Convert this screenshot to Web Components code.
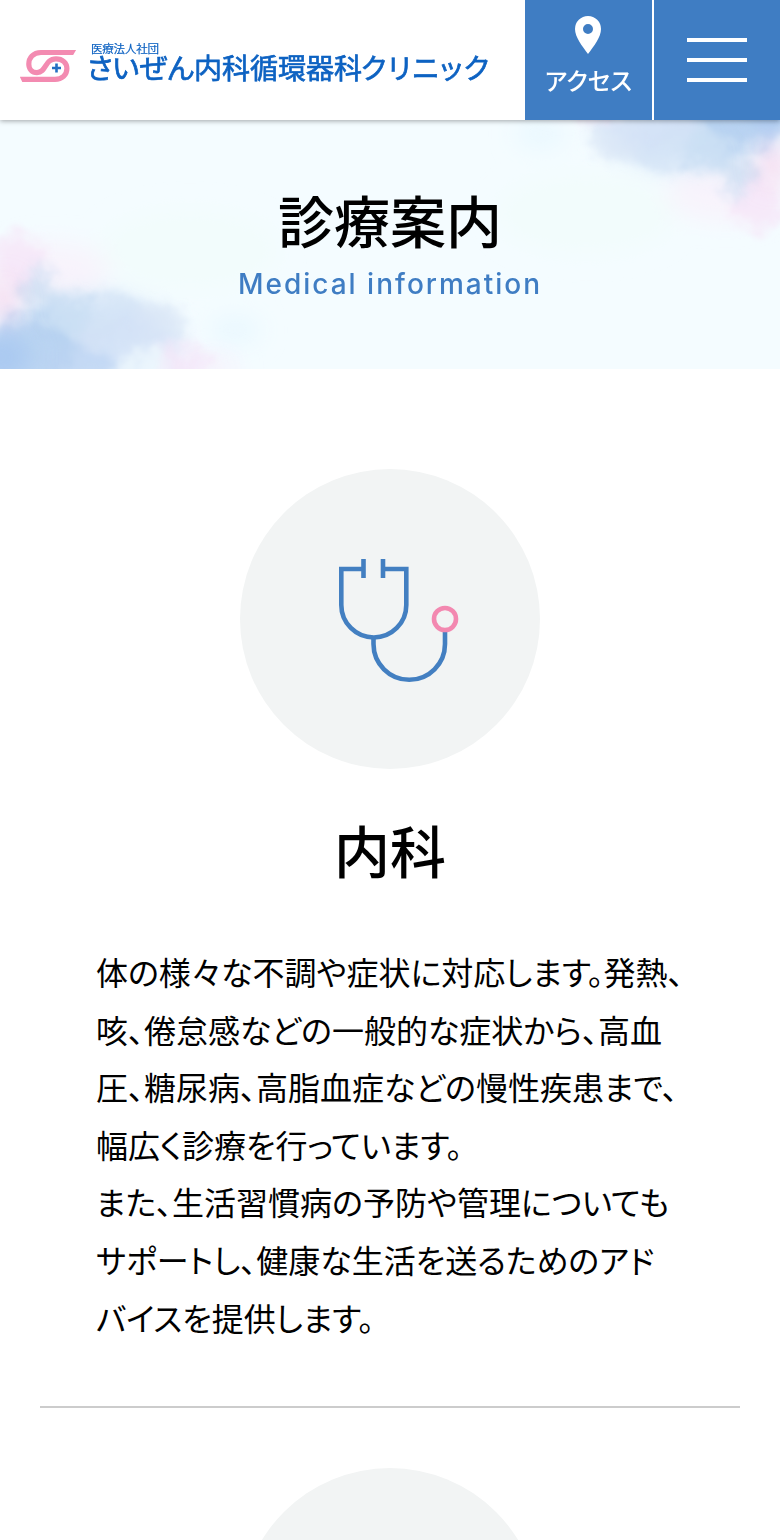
<!DOCTYPE html>
<html lang="ja">
<head>
  <meta charset="UTF-8">
  <title>診療案内</title>
  <style>
    body {
      margin: 0;
      height: 100vh;
      background: #fff;
      color: #000;
      font-family: "Noto Sans CJK JP", sans-serif;
      font-feature-settings: "palt";
      overflow: hidden;
    }
    main {
      height: calc(100vh - 369px);
      overflow: hidden;
    }
  </style>
</head>
<body>
  <site-header></site-header>
  <page-title>
    診療案内
    <span slot="en">Medical information</span>
  </page-title>
  <main>
    <department-card>
      <stethoscope-icon slot="icon"></stethoscope-icon>
      <span slot="name">内科</span>
      体の様々な不調や症状に対応します。発熱、<br>
      咳、倦怠感などの一般的な症状から、高血<br>
      圧、糖尿病、高脂血症などの慢性疾患まで、<br>
      幅広く診療を行っています。<br>
      また、生活習慣病の予防や管理についても<br>
      サポートし、健康な生活を送るためのアド<br>
      バイスを提供します。
    </department-card>
    <department-card></department-card>
  </main>

  <template id="clinic-logo">
    <style>
      :host { display: block; }
      svg { display: block; }
      text { fill: #0d62c2; stroke: #0d62c2; }
    </style>
    <svg width="490" height="120" viewBox="0 0 490 120">
      <clipPath id="tips">
        <path d="M24 45 H79 L72 57 V90 H26 L19 75 Z"/>
      </clipPath>
      <path clip-path="url(#tips)" d="M78 52.500 H41 C33 52.500 28.800 58 28.800 64 C28.800 69 32 72.600 37 72.600 C46.500 72.600 44.500 58.800 56 58.800 C62.500 58.800 66.900 63 66.900 68.500 C66.900 75 62 79.300 55 79.300 H20" fill="none" stroke="#f38bb1" stroke-width="5.200"/>
      <path d="M56.500 63.500 v9 M52 68 h9" stroke="#2470c2" stroke-width="2.600"/>
      <text x="91" y="52.500" font-size="11.500" stroke-width=".2" textLength="68">医療法人社団</text>
      <text x="87" y="78.500" font-size="28.500" stroke-width=".7" textLength="107">さいぜん</text>
      <text x="194" y="78.500" font-size="28" stroke-width=".7" textLength="168">内科循環器科</text>
      <text x="361" y="78.500" font-size="28" stroke-width=".7" textLength="128">クリニック</text>
    </svg>
  </template>

  <template id="site-header">
    <style>
      :host {
        display: flex;
        justify-content: space-between;
        height: 120px;
        position: relative;
        z-index: 1;
        background: #fff;
        box-shadow: 0 1px 5px rgba(0, 0, 0, .35);
      }
      nav { display: flex; gap: 2px; }
      a {
        display: flex;
        flex-direction: column;
        align-items: center;
        background: #3f7dc3;
        color: #fff;
      }
      .access {
        width: 127px;
        box-sizing: border-box;
        padding-top: 16px;
        font-size: 24px;
        font-weight: 500;
        line-height: 34px;
      }
      .access svg { margin: 0 1px 9px 0; }
      .menu { width: 126px; justify-content: center; gap: 16px; }
      .menu i { width: 60px; height: 4px; background: #fff; }
    </style>
    <clinic-logo></clinic-logo>
    <nav>
      <a class="access">
        <svg width="26" height="38" viewBox="0 0 26 38">
          <path fill="#fff" fill-rule="evenodd" d="M13 0 A13 13 0 0 0 0 13 C0 21 7 30 13 38 C19 30 26 21 26 13 A13 13 0 0 0 13 0 Z M13 8 a5 5 0 1 1 0 10 a5 5 0 1 1 0 -10 Z"/>
        </svg>
        <span>アクセス</span>
      </a>
      <a class="menu"><i></i><i></i><i></i></a>
    </nav>
  </template>

  <template id="page-title">
    <style>
      :host {
        display: grid;
        height: 249px;
        background: #f4fcff;
        overflow: hidden;
        text-align: center;
      }
      svg, .text { grid-area: 1 / 1; }
      svg { display: block; }
      .text { z-index: 1; }
      h1 {
        margin: 58px 0 0;
        font-size: 56px;
        font-weight: 500;
        line-height: 81px;
      }
      p {
        margin: 8px 0 0;
        color: #3f7dc3;
        font: 500 28px/34px Inter, sans-serif;
        letter-spacing: 2px;
      }
    </style>
    <svg width="780" height="249" viewBox="0 120 780 249">
      <defs>
        <!-- ragged watercolor edge -->
        <filter id="wash" x="-30%" y="-30%" width="160%" height="160%">
          <feGaussianBlur in="SourceGraphic" stdDeviation="7" result="blurred"/>
          <feTurbulence type="fractalNoise" baseFrequency=".03" numOctaves="6" seed="7"/>
          <feDisplacementMap in="blurred" scale="38" xChannelSelector="R" yChannelSelector="G"/>
          <feGaussianBlur stdDeviation=".8"/>
        </filter>
        <filter id="soft" x="-50%" y="-50%" width="200%" height="200%">
          <feGaussianBlur stdDeviation="12"/>
        </filter>
        <g id="cloud">
          <g filter="url(#soft)">
            <ellipse cx="50" cy="270" rx="60" ry="28" fill="#f9f1fb" opacity=".8"/>
            <ellipse cx="90" cy="335" rx="85" ry="42" fill="#dcebfa" opacity=".9"/>
            <ellipse cx="190" cy="250" rx="90" ry="40" fill="#f2fcfc"/>
            <ellipse cx="235" cy="330" rx="26" ry="14" fill="#e9f8fe"/>
          </g>
          <g filter="url(#wash)">
            <ellipse cx="20" cy="260" rx="24" ry="24" fill="#f6e6f7" opacity=".8"/>
            <ellipse cx="36" cy="288" rx="17" ry="20" fill="#cddff3" opacity=".8"/>
            <ellipse cx="70" cy="328" rx="36" ry="36" fill="#c5dcf3" opacity=".8"/>
            <ellipse cx="118" cy="318" rx="34" ry="26" fill="#d3e4f6" opacity=".8"/>
            <ellipse cx="157" cy="325" rx="26" ry="20" fill="#d9e6f6" opacity=".8"/>
            <ellipse cx="125" cy="350" rx="50" ry="26" fill="#d3e1f6" opacity=".7"/>
            <ellipse cx="28" cy="358" rx="44" ry="42" fill="#b3cff0" opacity=".8"/>
            <ellipse cx="82" cy="374" rx="38" ry="26" fill="#bad3f2" opacity=".7"/>
            <ellipse cx="184" cy="362" rx="26" ry="18" fill="#f3e7f8" opacity=".9"/>
            <path d="M110 376 L145 345 L168 365 L160 380 Z" fill="#eff9fe" opacity=".8"/>
          </g>
          <g filter="url(#soft)">
            <ellipse cx="3" cy="300" rx="13" ry="20" fill="#f8cdea" opacity=".8"/>
            <ellipse cx="0" cy="357" rx="32" ry="26" fill="#a5c5f0" opacity=".8"/>
            <ellipse cx="212" cy="368" rx="26" ry="12" fill="#f8eefb" opacity=".8"/>
          </g>
        </g>
      </defs>
      <use href="#cloud"/>
      <use href="#cloud" transform="rotate(180 388 232)"/>
    </svg>
    <div class="text">
      <h1><slot></slot></h1>
      <p><slot name="en"></slot></p>
    </div>
  </template>

  <template id="stethoscope-icon">
    <style>
      :host { display: block; }
      svg { display: block; }
    </style>
    <svg width="120" height="124" viewBox="0 0 120 124" fill="none" stroke="#437fc1" stroke-width="4.600">
      <path d="M24.500 0 V19 M44 0 V19 M24 10 H2.300 V46 A32.500 32.500 0 0 0 67.300 46 V10 H44"/>
      <path d="M34.500 79 V85 A35.750 35.750 0 0 0 106 85 V72"/>
      <circle cx="106" cy="60" r="11" stroke="#f388b0"/>
    </svg>
  </template>

  <template id="department-card">
    <style>
      :host {
        display: block;
        margin: 0 40px;
        border-bottom: 2px solid #ccc;
        padding: 100px 56px 60px;
      }
      :host(:last-of-type) { padding-top: 60px; }
      .circle {
        display: flex;
        align-items: center;
        justify-content: center;
        width: 300px;
        height: 300px;
        margin: 0 auto;
        border-radius: 50%;
        background: #f2f4f4;
      }
      .circle ::slotted(*) { margin: 4px 0 0 17px; }
      h2 {
        margin: 39px 0 54px;
        font-size: 56px;
        font-weight: 500;
        line-height: 81px;
        text-align: center;
      }
      .text {
        font-size: 32px;
        line-height: 57.6px;
        white-space: nowrap;
      }
    </style>
    <div class="circle"><slot name="icon"></slot></div>
    <h2><slot name="name"></slot></h2>
    <div class="text"><slot></slot></div>
  </template>

  <script>
    const define = (name) => {
      const template = document.getElementById(name);
      window.customElements.define(name, class extends HTMLElement {
        constructor() {
          super();
          this.attachShadow({mode: 'open'});
          this.shadowRoot.appendChild(template.content.cloneNode(true));
        }
      });
    };

    define('clinic-logo');
    define('site-header');
    define('page-title');
    define('stethoscope-icon');
    define('department-card');
  </script>
</body>
</html>
